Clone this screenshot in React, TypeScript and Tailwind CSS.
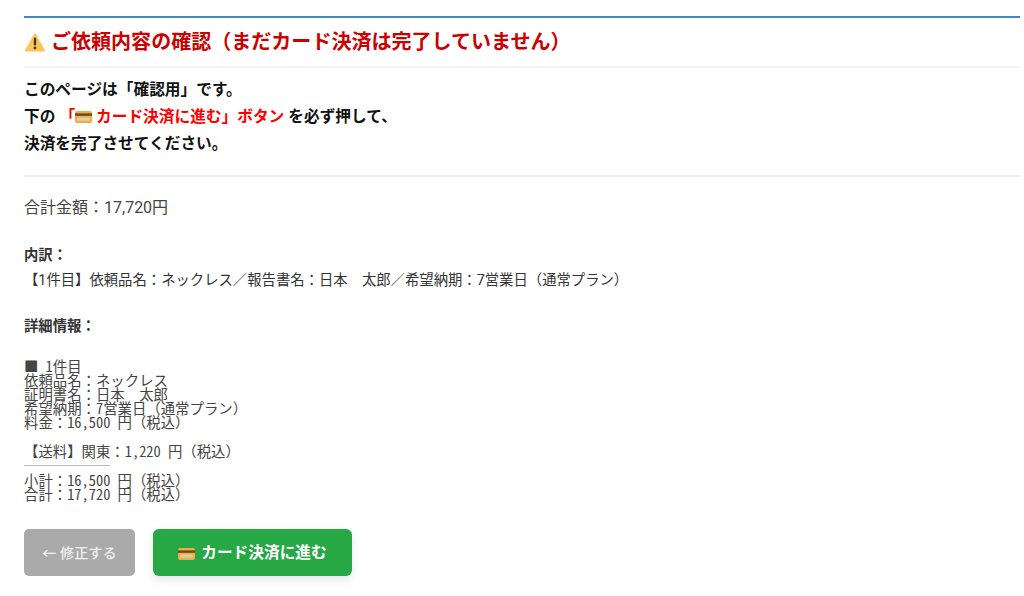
const sans = "font-['Roboto','Noto_Sans_CJK_JP',sans-serif]";

function WarningIcon() {
  return (
    <svg width="20" height="19" viewBox="0 0 20 19" className="ml-[1px] shrink-0">
      <path d="M10 1.5 L19 17.5 H1 Z" fill="#fcc559" stroke="#fcc559" strokeWidth="2" strokeLinejoin="round" />
      <rect x="8.8" y="4.5" width="2.4" height="8" rx="1.2" fill="#3f3a30" />
      <circle cx="10" cy="15" r="1.4" fill="#3f3a30" />
    </svg>
  );
}

function CardIcon() {
  return (
    <svg width="17" height="12" viewBox="0 0 17 12" className="inline-block shrink-0">
      <rect x="0" y="0" width="17" height="12" rx="2" fill="#f6aa3c" />
      <rect x="0" y="2.4" width="17" height="2.4" fill="#5f4a2c" />
      <rect x="2" y="6.5" width="13" height="3.2" fill="#d9cdb5" />
    </svg>
  );
}

export default function App() {
  return (
    <div className={`${sans} w-[1024px] h-[596px] overflow-hidden bg-white px-6 pt-4 text-[#333] text-sm`}>
      <div className="w-[996px] border-t-2 border-[#4a86bf]">
        {/* Heading */}
        <h2 className="flex items-center gap-[6px] h-[50px] border-b-2 border-[#f3f3f3] text-[20.05px] font-bold text-[#cc0000]">
          <WarningIcon />
          <span>ご依頼内容の確認（まだカード決済は完了していません）</span>
        </h2>

        {/* Notice */}
        <div className="pt-[8px] pb-[18px] border-b-2 border-[#eeeeee] text-[15.7px] leading-[27px] font-bold text-[#111]">
          <p>このページは「確認用」です。</p>
          <p className="flex items-center">
            下の
            <span className="ml-[4px] flex items-center text-[#ff0000]">
              「<CardIcon /><span className="ml-[4px]">カード決済に進む」ボタン</span>
            </span>
            <span className="ml-[4px]">を必ず押して、</span>
          </p>
          <p>決済を完了させてください。</p>
        </div>

        {/* Summary */}
        <p className="mt-[19px] text-base leading-[24px] text-[#444]">合計金額：17,720円</p>
        <p className="mt-[24px] text-[14.35px] font-bold leading-[24px] text-[#333]">内訳：</p>
        <p className="mt-[1px] text-[14.35px] leading-[24px] text-[#333]">【1件目】依頼品名：ネックレス／報告書名：日本　太郎／希望納期：7営業日（通常プラン）</p>
        <p className="mt-[22px] text-[14.35px] font-bold leading-[24px] text-[#333]">詳細情報：</p>

        {/* Detail block */}
        <div className="mt-[20px] font-['Noto_Sans_Mono_CJK_JP','Noto_Sans_CJK_JP',monospace] text-[14.4px] leading-[14px] text-[#444]">
          <p>■ 1件目</p>
          <p>依頼品名：ネックレス</p>
          <p>証明書名：日本　太郎</p>
          <p>希望納期：7営業日（通常プラン）</p>
          <p>料金：16,500 円（税込）</p>
          <p className="mt-[15px]">【送料】関東：1,220 円（税込）</p>
          <hr className="mt-[7px] mb-[7px] w-[86px] border-t border-[#bbbbbb]" />
          <p>小計：16,500 円（税込）</p>
          <p>合計：17,720 円（税込）</p>
        </div>

        {/* Buttons */}
        <div className="mt-[28px] flex gap-[18px]">
          <button className="flex h-[47px] w-[111px] items-center justify-center rounded-[5px] bg-[#aaaaaa] pt-[2px] text-[14.2px] font-medium text-[#eeeeee]">
            ← 修正する
          </button>
          <button className="flex h-[47px] w-[199px] items-center justify-center gap-[6px] rounded-[6px] bg-[#28a745] pt-[2px] text-[15.7px] font-bold text-white shadow-[0_4px_10px_rgba(0,0,0,0.1)]">
            <CardIcon />
            カード決済に進む
          </button>
        </div>
      </div>
    </div>
  );
}
